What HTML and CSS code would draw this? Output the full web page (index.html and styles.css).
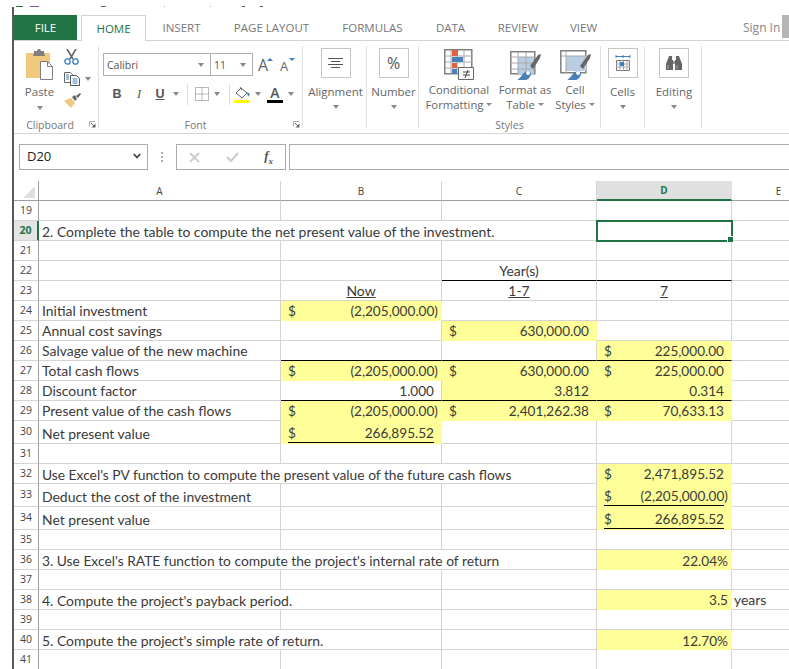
FILE: index.html
```html
<!DOCTYPE html>
<html lang="en">
<head>
<meta charset="utf-8">
<title>Excel</title>
<link rel="stylesheet" href="styles.css">
</head>
<body>
<div class="crumbs"><i class="c1"></i><i class="c2"></i><i class="c3"></i><i class="c4"></i><i class="c5"></i><i class="c6"></i><i class="c7"></i></div>
<div class="app">
  <nav class="tabs">
    <span class="tab file">FILE</span>
    <span class="tab home">HOME</span>
    <span class="tab t-insert">INSERT</span>
    <span class="tab t-layout">PAGE LAYOUT</span>
    <span class="tab t-form">FORMULAS</span>
    <span class="tab t-data">DATA</span>
    <span class="tab t-review">REVIEW</span>
    <span class="tab t-view">VIEW</span>
    <span class="signin">Sign In</span>
    <span class="corner"></span>
  </nav>

  <section class="ribbon">
    <div class="group g-clip">
      <div class="clip-body">
        <div class="paste">
          <svg width="29" height="32" viewBox="0 0 29 32"><path d="M1 5h24v25H1z" fill="#f0c97e"/><path d="M9 5V3h3l1-2h2l1 2h3v2l1 3H8z" fill="#7f7f7f"/><path d="M15.500 13.500h7l5 5v13h-12z" fill="#fff" stroke="#7f7f7f"/><path d="M22.500 13.500v5h5" fill="none" stroke="#7f7f7f"/></svg>
          <span class="lbl">Paste</span>
          <i class="caret"></i>
        </div>
        <div class="clip-tools">
          <svg width="15" height="16" viewBox="0 0 15 16"><path d="M3 0l6 10M12 0L6 10" stroke="#666" stroke-width="1.600" fill="none"/><circle cx="3.500" cy="12.500" r="2.700" fill="none" stroke="#3f7fbf" stroke-width="1.300"/><circle cx="11.500" cy="12.500" r="2.700" fill="none" stroke="#3f7fbf" stroke-width="1.300"/></svg>
          <div class="copy-row"><svg width="16" height="14" viewBox="0 0 16 14"><path d="M.500.500h6l2 2v8h-8z" fill="#fff" stroke="#666"/><path d="M6.500 3.500h6l3 3v7h-9z" fill="#fff" stroke="#555"/><path d="M2 3h3M2 5h3M2 7h3M8.500 7h5M8.500 9h5M8.500 11h5" stroke="#3f7fbf"/></svg><i class="caret"></i></div>
          <svg width="17" height="15" viewBox="0 0 17 15"><path d="M0 8l7-3 4 5-4 5z" fill="#f0c97e"/><path d="M8 4l3-2 2 4-2 2zM12 3l4-3 1 1-3 4z" fill="#666"/></svg>
        </div>
      </div>
      <div class="glabel lab-clip">Clipboard<svg class="launch" width="7" height="7" viewBox="0 0 7 7"><path d="M.500 5V.500H6" fill="none" stroke="#aaa"/><path d="M2 2l3 3" stroke="#666"/><path d="M6.500 2.500v4h-4z" fill="#666"/></svg></div>
    </div>

    <div class="group g-font">
      <div class="font-top">
        <div class="combo name">Calibri<i class="caret"></i></div>
        <div class="combo size">11<i class="caret"></i></div>
        <span class="grow big">A<b class="tri up"></b></span>
        <span class="grow small">A<b class="tri down"></b></span>
      </div>
      <div class="font-bot">
        <span class="fb bold">B</span>
        <span class="fb ital">I</span>
        <span class="fb und">U</span>
        <i class="caret c-u"></i>
        <i class="vsep"></i>
        <svg class="bd" width="14" height="14" viewBox="0 0 14 14"><path d="M.500.500h13v13H.500zM7 .500v13M.500 7h13" fill="none" stroke="#777" stroke-dasharray="1 1"/></svg>
        <i class="caret"></i>
        <i class="vsep v2"></i>
        <span class="fill-ic"><svg width="16" height="12" viewBox="0 0 16 12"><path d="M7 1l6 5-5 5-6-5z" fill="#fff" stroke="#666"/><path d="M6 0l2 3" stroke="#666"/><path d="M13 5l3 2-2 3z" fill="#3f7fbf"/></svg><b class="swatch y"></b></span>
        <i class="caret"></i>
        <span class="fill-ic txt"><span class="fa">A</span><b class="swatch k"></b></span>
        <i class="caret"></i>
      </div>
      <div class="glabel lab-font">Font<svg class="launch" width="7" height="7" viewBox="0 0 7 7"><path d="M.500 5V.500H6" fill="none" stroke="#aaa"/><path d="M2 2l3 3" stroke="#666"/><path d="M6.500 2.500v4h-4z" fill="#666"/></svg></div>
    </div>

    <div class="group g-align">
      <div class="boxed"><svg width="15" height="11" viewBox="0 0 15 11"><path d="M0 .500h15M3 3.500h9M0 6.500h15M3 9.500h9" stroke="#555"/></svg></div>
      <span class="lbl">Alignment</span>
      <i class="caret"></i>
    </div>

    <div class="group g-num">
      <div class="boxed pct">%</div>
      <span class="lbl">Number</span>
      <i class="caret"></i>
    </div>

    <div class="group g-styles">
      <div class="style-row">
        <div class="style-item si-cf">
          <svg width="31" height="31" viewBox="0 0 31 31"><path d="M.800.800h27v24h-27z" fill="#fff" stroke="#808080" stroke-width="1.500"/><path d="M7 1v24M13 1v24M20 1v24M1 7h27M1 13h27M1 19h27" stroke="#aaa"/><path d="M8 1h6v6H8z" fill="#dd6243"/><path d="M8 8h11v5H8z" fill="#4a80b8"/><path d="M8 14h5v5H8z" fill="#dd6243"/><path d="M8 20h5v5H8z" fill="#4a80b8"/><path d="M14.500 18.500h15v12h-15z" fill="#fff" stroke="#666"/><path d="M19 23h7M19 26h7M24 21l-3 8" stroke="#444"/></svg>
          <span class="lbl2">Conditional</span><span class="lbl2">Formatting<i class="caret mini"></i></span>
        </div>
        <div class="style-item si-ft">
          <svg width="31" height="31" viewBox="0 0 31 31"><path d="M.800 2.800h24v22h-24z" fill="#fff" stroke="#808080" stroke-width="1.500"/><path d="M8 8h16v17H8z" fill="#b9cde3"/><path d="M8 3v22M16 3v22M1 8h24M1 14h24M1 20h24" stroke="#aaa"/><path d="M20 17l8-11 3-1-1 4-7 11z" fill="#666"/><path d="M7 31c3-1 5-6 8-8 3-2 6-1 6 2 0 2-3 6-5 6z" fill="#4a80b8"/><circle cx="18" cy="24" r="2" fill="#fff"/></svg>
          <span class="lbl2">Format as</span><span class="lbl2">Table<i class="caret mini"></i></span>
        </div>
        <div class="style-item si-cs">
          <svg width="31" height="31" viewBox="0 0 31 31"><path d="M.800 1.800h25v22h-25z" fill="#fff" stroke="#808080" stroke-width="1.500"/><path d="M6 7h20v15H6z" fill="#b9cde3"/><path d="M1 7h25M6 2v22" stroke="#aaa"/><path d="M20 17l8-11 3-1-1 4-7 11z" fill="#666"/><path d="M7 31c3-1 5-6 8-8 3-2 6-1 6 2 0 2-3 6-5 6z" fill="#4a80b8"/><circle cx="18" cy="24" r="2" fill="#fff"/></svg>
          <span class="lbl2">Cell</span><span class="lbl2">Styles<i class="caret mini"></i></span>
        </div>
      </div>
      <div class="glabel">Styles</div>
    </div>

    <div class="group g-cells">
      <div class="boxed"><svg width="16" height="17" viewBox="0 0 16 17"><path d="M1 1.500h14M1 0v3M15 0v3M8 0v3" stroke="#3f7fbf"/><path d="M1.500 5.500h13v10h-13z" fill="#fff" stroke="#777"/><path d="M1 9h14M1 12h14M5 6v10M8.500 6v10M12 6v10" stroke="#aaa"/><path d="M5 7h4v4H5z" fill="#3f7fbf"/></svg></div>
      <span class="lbl">Cells</span>
      <i class="caret"></i>
    </div>

    <div class="group g-edit">
      <div class="boxed"><svg width="16" height="15" viewBox="0 0 16 15"><path d="M3 0h3v4h1v10H1V14H0V8zM10 0h3l3 8v6h-1v0H9V4h1z" fill="#666"/><path d="M7 5h2v3H7z" fill="#999"/><path d="M2 9v4M11 9v4" stroke="#aaa"/></svg></div>
      <span class="lbl">Editing</span>
      <i class="caret"></i>
    </div>
  </section>

  <div class="fbar">
    <div class="namebox"><span>D20</span><svg width="8" height="6" viewBox="0 0 8 6"><path d="M.800 1l3.200 3.500L7.200 1" fill="none" stroke="#444" stroke-width="1.800"/></svg></div>
    <div class="dots"><i></i><i></i><i></i></div>
    <div class="fx">
      <svg width="11" height="11" viewBox="0 0 11 11"><path d="M1 1l9 9M10 1l-9 9" stroke="#ccc" stroke-width="1.800"/></svg>
      <svg width="13" height="10" viewBox="0 0 13 10"><path d="M1 5l4 4 7-8" fill="none" stroke="#ccc" stroke-width="2"/></svg>
      <span class="fxt">f<sub>x</sub></span>
    </div>
    <div class="finput"></div>
  </div>

  <table class="sheet">
    <colgroup><col class="c-h"><col class="c-a"><col class="c-b"><col class="c-c"><col class="c-d"><col class="c-e"></colgroup>
    <tr class="hdr"><th class="cornercell"><i></i></th><th>A</th><th>B</th><th>C</th><th class="act">D</th><th>E</th></tr>
    <tr><th>19</th><td></td><td></td><td></td><td></td><td></td></tr>
    <tr><th class="actrow">20</th><td colspan="3" class="tx lo">2. Complete the table to compute the net present value of the investment.</td><td class="sel"><i class="handle"></i></td><td></td></tr>
    <tr><th>21</th><td></td><td></td><td></td><td></td><td></td></tr>
    <tr><th>22</th><td></td><td></td><td class="ctr bb">Year(s)</td><td class="bb"></td><td></td></tr>
    <tr><th>23</th><td></td><td class="ctr"><u>Now</u></td><td class="ctr"><u>1-7</u></td><td class="ctr"><u>7</u></td><td></td></tr>
    <tr><th>24</th><td class="tx">Initial investment</td><td class="y"><div class="acct"><span>$</span><span class="neg">(2,205,000.00)</span></div></td><td></td><td></td><td></td></tr>
    <tr><th>25</th><td class="tx">Annual cost savings</td><td></td><td class="y"><div class="acct"><span>$</span><span>630,000.00</span></div></td><td></td><td></td></tr>
    <tr><th>26</th><td class="tx">Salvage value of the new machine</td><td class="bb"></td><td class="bb"></td><td class="y bb"><div class="acct"><span>$</span><span>225,000.00</span></div></td><td></td></tr>
    <tr><th>27</th><td class="tx">Total cash flows</td><td class="y"><div class="acct"><span>$</span><span class="neg">(2,205,000.00)</span></div></td><td class="y"><div class="acct"><span>$</span><span>630,000.00</span></div></td><td class="y"><div class="acct"><span>$</span><span>225,000.00</span></div></td><td></td></tr>
    <tr><th>28</th><td class="tx">Discount factor</td><td class="rt bb">1.000</td><td class="y rt bb">3.812</td><td class="y rt bb">0.314</td><td></td></tr>
    <tr><th>29</th><td class="tx">Present value of the cash flows</td><td class="y"><div class="acct"><span>$</span><span class="neg">(2,205,000.00)</span></div></td><td class="y"><div class="acct"><span>$</span><span>2,401,262.38</span></div></td><td class="y"><div class="acct"><span>$</span><span>70,633.13</span></div></td><td></td></tr>
    <tr class="tall"><th>30</th><td class="tx">Net present value</td><td class="y"><div class="acct rule"><span>$</span><span>266,895.52</span></div></td><td></td><td></td><td></td></tr>
    <tr><th>31</th><td></td><td></td><td></td><td></td><td></td></tr>
    <tr><th>32</th><td colspan="3" class="tx lo sm">Use Excel's PV function to compute the present value of the future cash flows</td><td class="y"><div class="acct"><span>$</span><span>2,471,895.52</span></div></td><td></td></tr>
    <tr class="tall"><th>33</th><td class="tx">Deduct the cost of the investment</td><td></td><td></td><td class="y"><div class="acct rule"><span>$</span><span class="neg">(2,205,000.00)</span></div></td><td></td></tr>
    <tr class="tall"><th>34</th><td class="tx">Net present value</td><td></td><td></td><td class="y"><div class="acct rule"><span>$</span><span>266,895.52</span></div></td><td></td></tr>
    <tr><th>35</th><td></td><td></td><td></td><td></td><td></td></tr>
    <tr><th>36</th><td colspan="3" class="tx lo sm">3. Use Excel's RATE function to compute the project's internal rate of return</td><td class="y rt2 lo">22.04%</td><td></td></tr>
    <tr><th>37</th><td></td><td></td><td></td><td></td><td></td></tr>
    <tr><th>38</th><td colspan="2" class="tx lo">4. Compute the project's payback period.</td><td></td><td class="y rt2">3.5</td><td class="tx e">years</td></tr>
    <tr><th>39</th><td></td><td></td><td></td><td></td><td></td></tr>
    <tr><th>40</th><td colspan="2" class="tx lo">5. Compute the project's simple rate of return.</td><td></td><td class="y rt2 lo">12.70%</td><td></td></tr>
    <tr><th>41</th><td></td><td></td><td></td><td></td><td></td></tr>
  </table>
</div>
</body>
</html>
```

FILE: styles.css
```css
* { box-sizing: border-box; }
html, body { margin: 0; padding: 0; height: 669px; overflow: hidden; background: #fff; }
body { font-family: "Open Sans", "Liberation Sans", sans-serif; color: #666; position: relative; }
i { display: block; font-style: normal; }

.crumbs { height: 7px; display: flex; padding-left: 16px; align-items: flex-end; }
.crumbs i { height: 1px; }
.crumbs .c1 { width: 7px; background: #217346; }
.crumbs .c2 { width: 9px; margin-left: 7px; background: #7a4fa3; }
.crumbs .c3 { width: 5px; margin-left: 62px; background: #666; }
.crumbs .c4 { width: 1px; margin-left: 58px; background: #c9a36a; }
.crumbs .c5 { width: 1px; margin-left: 45px; background: #c9a36a; }
.crumbs .c6 { width: 3px; margin-left: 31px; background: #555; }
.crumbs .c7 { width: 3px; margin-left: 15px; background: #555; }

.app { margin-left: 12px; border-left: 2px solid #5a5a5a; height: 662px; overflow: hidden; }

.tabs { height: 34px; padding-top: 8px; display: flex; align-items: stretch; border-bottom: 1px solid #d4d4d4; font-size: 11.500px; color: #777; position: relative; }
.tab { display: flex; align-items: center; justify-content: center; white-space: nowrap; }
.file { width: 63px; background: #217346; color: #fff; font-size: 11.500px; }
.home { width: 65px; margin-left: 4px; margin-bottom: -1px; background: #fff; color: #217346; border: 1px solid #d4d4d4; border-bottom: 0; }
.t-insert { margin-left: 16px; width: 39px; }
.t-layout { margin-left: 33px; width: 75px; }
.t-form { margin-left: 33px; width: 61px; }
.t-data { margin-left: 33px; width: 29px; }
.t-review { margin-left: 33px; width: 40px; }
.t-view { margin-left: 32px; width: 27px; }
.signin { margin-left: 146px; display: flex; align-items: center; color: #888; font-size: 12px; white-space: nowrap; }
.corner { position: absolute; right: 0; top: 8px; width: 7px; height: 23px; background: #b5b5b5; }

.ribbon { height: 93px; display: flex; border-bottom: 1px solid #d4d4d4; padding-top: 5px; }
.group { height: 82px; border-right: 1px solid #e1e1e1; position: relative; display: flex; flex-direction: column; align-items: center; }
.lbl { font-size: 11.500px; color: #666; line-height: 14px; white-space: nowrap; }
.lbl2 { font-size: 11.300px; color: #666; line-height: 15px; white-space: nowrap; display: flex; align-items: center; }
.glabel { position: absolute; left: 0; right: 0; top: 72px; height: 14px; font-size: 10.500px; line-height: 14px; text-align: center; color: #777; }
.lab-clip { padding-right: 12px; }
.lab-font { padding-right: 10px; }
.caret { width: 0; height: 0; border-left: 3.500px solid transparent; border-right: 3.500px solid transparent; border-top: 4px solid #888; flex: none; }
.caret.mini { margin-left: 3px; border-left-width: 3px; border-right-width: 3px; border-top-width: 3px; }
.launch { position: absolute; right: 2px; top: 3px; }

.g-clip { width: 85px; }
.clip-body { display: flex; gap: 10px; padding-left: 11px; width: 100%; }
.paste { width: 29px; display: flex; flex-direction: column; align-items: center; padding-top: 2px; }
.paste .lbl { margin-top: 5px; }
.paste .caret { margin-top: 7px; }
.clip-tools { display: flex; flex-direction: column; gap: 7px; padding-top: 3px; }
.copy-row { display: flex; align-items: center; gap: 5px; }

.g-font { width: 204px; align-items: flex-start; padding: 7px 0 0 4px; }
.font-top { display: flex; align-items: stretch; height: 23px; }
.combo { display: flex; justify-content: space-between; align-items: center; border: 1px solid #b0b0b0; font-size: 10.500px; color: #555; padding: 0 6px 0 3px; height: 23px; }
.name { width: 108px; }
.size { width: 43px; margin-left: -1px; }
.grow { position: relative; color: #666; display: flex; align-items: center; }
.grow.big { font-size: 16px; margin-left: 5px; width: 22px; padding-top: 1px; }
.grow.small { font-size: 13px; width: 14px; padding-top: 3px; }
.tri { position: absolute; width: 0; height: 0; left: 9px; top: 5px; border-left: 3px solid transparent; border-right: 3px solid transparent; }
.tri.up { border-bottom: 3px solid #3f7fbf; }
.tri.down { border-top: 3px solid #3f7fbf; }
.font-bot { display: flex; align-items: center; height: 18px; margin-top: 9px; padding-left: 7px; }
.fb { font-size: 12.500px; color: #555; width: 10px; text-align: center; font-family: "Liberation Sans", sans-serif; }
.bold { font-weight: 700; margin-left: 2px; }
.ital { font-style: italic; margin-left: 12px; font-family: "Liberation Serif", serif; }
.und { margin-left: 11px; font-weight: 700; text-decoration: underline; }
.c-u { margin-left: 8px; }
.vsep { width: 1px; height: 21px; background: #ddd; margin: 0 7px 0 8px; }
.vsep.v2 { margin: 0 7px 0 9px; }
.bd { margin-right: 5px; }
.fill-ic { width: 16px; height: 18px; display: flex; flex-direction: column; align-items: center; justify-content: flex-end; margin-right: 5px; margin-left: -3px; }
.fill-ic.txt { margin-left: 6px; }
.fa { font-size: 14px; line-height: 14px; color: #555; font-weight: 600; }
.swatch { display: block; width: 16px; height: 3px; flex: none; }
.swatch.y { background: #ffff00; margin-top: 1px; }
.swatch.k { background: #000; }

.boxed { width: 30px; height: 30px; border: 1px solid #c6c6c6; display: flex; align-items: center; justify-content: center; flex: none; }
.pct { font-size: 16px; color: #555; }
.g-align, .g-num, .g-cells, .g-edit { padding-top: 2px; }
.g-align, .g-num, .g-edit { padding-left: 2px; }
.g-align .lbl, .g-num .lbl, .g-cells .lbl, .g-edit .lbl { margin-top: 7px; }
.g-align .caret, .g-num .caret, .g-cells .caret, .g-edit .caret { margin-top: 6px; }
.g-align { width: 64px; }
.g-num { width: 52px; }
.g-styles { width: 182px; }
.style-row { display: flex; width: 100%; }
.style-item { position: absolute; top: 3px; display: flex; flex-direction: column; align-items: center; }
.style-item svg { margin-bottom: 2px; }
.si-cf { left: 5px; width: 70px; }
.si-ft { left: 76px; width: 60px; }
.si-cs { left: 133px; width: 46px; }
.g-cells { width: 44px; }
.g-edit { width: 57px; }

.fbar { height: 36px; padding-top: 10px; display: flex; align-items: stretch; }
.namebox { margin-left: 5px; width: 129px; height: 26px; border: 1px solid #ababab; display: flex; justify-content: space-between; align-items: center; padding: 0 6px 2px 7px; font-size: 13px; color: #222; }
.dots { width: 28px; height: 26px; display: flex; flex-direction: column; align-items: center; justify-content: center; gap: 2px; }
.dots i { width: 2px; height: 2px; background: #aaa; }
.fx { width: 110px; height: 26px; border: 1px solid #ababab; display: flex; align-items: center; justify-content: space-between; padding: 0 12px; }
.fxt { font-family: "Liberation Serif", serif; font-style: italic; font-size: 13px; color: #555; font-weight: 700; }
.fxt sub { font-size: 9px; }
.finput { flex: 1; height: 26px; margin-left: 3px; border: 1px solid #ababab; border-right: 0; }

.sheet { border-collapse: separate; border-spacing: 0; table-layout: fixed; width: 812px; margin-top: 11px; font-family: Lato, "Open Sans", sans-serif; font-size: 13.950px; color: #3a3a3a; }
.c-h { width: 25px; }
.c-a { width: 242px; }
.c-b { width: 161px; }
.c-c { width: 155px; }
.c-d { width: 135px; }
.c-e { width: 94px; }
.sheet tr { height: 20px; }
.sheet tr.tall { height: 23px; }
.sheet td, .sheet th { padding: 0; height: 20px; border-right: 1px solid #d4d4d4; border-bottom: 1px solid #d4d4d4; white-space: nowrap; overflow: visible; vertical-align: bottom; line-height: 18px; }
.sheet td.lo { line-height: 16px; }
.sheet td.sm { font-size: 13.800px; }
.sheet tr.tall td, .sheet tr.tall th { height: 23px; }
.sheet th { font-family: "Open Sans", sans-serif; font-weight: 400; font-size: 10.500px; color: #444; text-align: center; border-right-color: #9e9e9e; vertical-align: middle; line-height: 14px; padding-bottom: 2px; }
.sheet .hdr th { height: 20px; border-right-color: #d4d4d4; border-bottom-color: #9e9e9e; font-size: 10px; padding-bottom: 0; }
.sheet .hdr th.cornercell { border-right-color: #9e9e9e; position: relative; }
.cornercell i { position: absolute; right: 3px; bottom: 2px; width: 0; height: 0; border-left: 12px solid transparent; border-bottom: 12px solid #dfdfdf; }
.sheet .hdr th.act { background: #e0e0e0; color: #217346; font-weight: 700; border-bottom: 2px solid #217346; border-right-color: #e0e0e0; }
.sheet th.actrow { background: #e4e4e4; color: #217346; font-weight: 700; border-right: 2px solid #217346; }
.tx { padding-left: 3px !important; }
.tx.e { padding-left: 2px !important; }
.ctr { text-align: center; }
.rt { text-align: right; padding-right: 7px !important; font-size: 13.600px; }
.rt2 { text-align: right; padding-right: 3px !important; font-size: 13.600px; }
.y { background: #ffff99; border-right-color: #ffff99 !important; border-bottom-color: #ffff99 !important; }
.sheet td.bb { border-bottom-color: #000 !important; }
.acct { display: flex; justify-content: space-between; margin: 0 7px; height: 18px; font-size: 13.600px; }
.rule { height: 20px; border-bottom: 1px solid #000; padding-top: 1px; }
.neg { margin-right: -4px; }
.sel { position: relative; outline: 2px solid #217346; outline-offset: -1px; }
.handle { position: absolute; right: -2px; bottom: -2px; width: 5px; height: 5px; background: #217346; border: 1px solid #fff; border-width: 1px 0 0 1px; box-sizing: content-box; z-index: 2; }
```
